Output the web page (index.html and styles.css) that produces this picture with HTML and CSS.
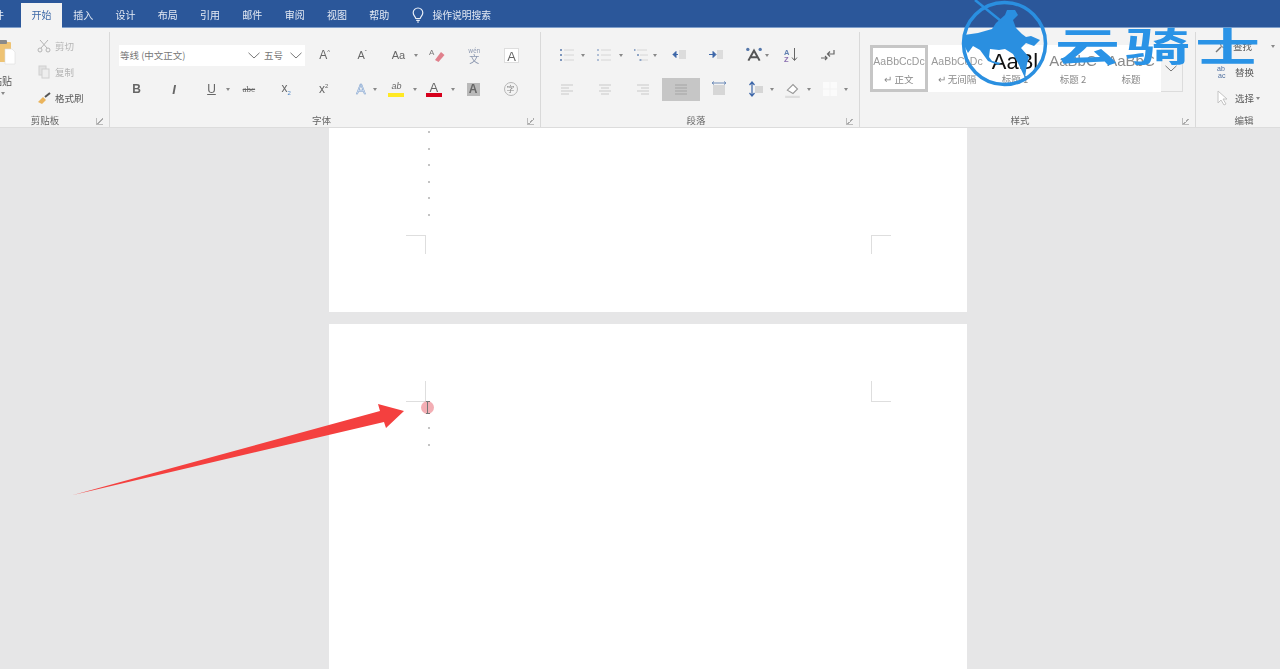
FILE: index.html
```html
<!DOCTYPE html>
<html lang="zh-CN">
<head>
<meta charset="utf-8">
<title>文档 - Word</title>
<link rel="stylesheet" href="styles.css">
</head>
<body>
<header class="chrome">
  <nav class="tabs">
    <span class="tab tab-file">文件</span>
    <span class="tab tab-active">开始</span>
    <span class="tab">插入</span>
    <span class="tab">设计</span>
    <span class="tab">布局</span>
    <span class="tab">引用</span>
    <span class="tab">邮件</span>
    <span class="tab">审阅</span>
    <span class="tab">视图</span>
    <span class="tab">帮助</span>
    <span class="tell">
      <svg class="bulb" viewBox="0 0 12 16"><path d="M3.800 11.500C3.400 9.600 1.200 8.600 1.200 5.800a4.800 4.800 0 0 1 9.600 0c0 2.800-2.200 3.800-2.600 5.700zM4.200 13.400h3.600M5 15h2" fill="none" stroke="#e8eef7" stroke-width="1.200"/></svg>
      操作说明搜索
    </span>
  </nav>
  <section class="ribbon">
    <div class="group group-clip">
      <div class="body clip-body">
        <div class="paste">
          <svg class="paste-ico" viewBox="0 0 22 26"><rect x="1" y="3" width="16" height="20" rx="1" fill="#eec374"/><rect x="5" y="1" width="8" height="4" rx="1" fill="#8a8a8a"/><path d="M11 10h7l3 3v12H11z" fill="#fff" stroke="#ddd" stroke-width=".6"/></svg>
          <span class="paste-text">粘贴</span>
          <i class="caret caret-paste"></i>
        </div>
        <div class="stack">
          <div class="small off"><svg class="ico" viewBox="0 0 16 16"><path d="M4 2l7 8M12 2L5 10" stroke="#b4b4b4" fill="none"/><circle cx="4" cy="12" r="2" fill="none" stroke="#b4b4b4"/><circle cx="12" cy="12" r="2" fill="none" stroke="#b4b4b4"/></svg><span>剪切</span></div>
          <div class="small off"><svg class="ico" viewBox="0 0 16 16"><rect x="3" y="2" width="7" height="9" fill="#e2e2e2" stroke="#d0d0d0"/><rect x="6" y="5" width="7" height="9" fill="#eee" stroke="#d0d0d0"/></svg><span>复制</span></div>
          <div class="small"><svg class="ico" viewBox="0 0 16 16"><path d="M2 12l5-5 3 3-4 4z" fill="#eab45c"/><path d="M9 7l5-4" stroke="#555" stroke-width="2"/></svg><span>格式刷</span></div>
        </div>
      </div>
      <div class="label label-clip">剪贴板</div>
      <i class="launcher"></i>
    </div>

    <div class="group group-font">
      <div class="body rows">
        <div class="row">
          <div class="select select-font"><span>等线 (中文正文)</span><svg class="chev" viewBox="0 0 12 7"><path d="M.5.8L6 6l5.500-5.200" fill="none" stroke="#777"/></svg></div>
          <div class="select select-size"><span>五号</span><svg class="chev" viewBox="0 0 12 7"><path d="M.5.8L6 6l5.500-5.200" fill="none" stroke="#777"/></svg></div>
          <span class="tool"><span class="t t-a">A<sup>^</sup></span></span>
          <span class="tool"><span class="t t-a t-a-sm">A<sup>ˇ</sup></span></span>
          <span class="tool"><span class="t t-aa">Aa</span><i class="caret"></i></span>
          <span class="tool"><svg class="ico" viewBox="0 0 16 16"><path d="M6 13l6-8 3.500 3-6 7z" fill="#e0808c"/><text x="0" y="8" class="svg-t">A</text></svg></span>
          <span class="tool"><span class="wen"><small>wén</small>文</span></span>
          <span class="tool"><span class="t t-box">A</span></span>
        </div>
        <div class="row row-fmt">
          <span class="tool"><b class="t t-b">B</b></span>
          <span class="tool"><i class="t t-i">I</i></span>
          <span class="tool"><span class="t t-u">U</span><i class="caret"></i></span>
          <span class="tool"><span class="t t-abc">abc</span></span>
          <span class="tool"><span class="t t-x">x<sub>2</sub></span></span>
          <span class="tool"><span class="t t-x">x<sup>2</sup></span></span>
          <span class="tool"><span class="t t-fx">A</span><i class="caret caret-near"></i></span>
          <span class="tool"><span class="t t-hl">ab</span><i class="caret"></i></span>
          <span class="tool"><span class="t t-red">A</span><i class="caret"></i></span>
          <span class="tool"><span class="t t-shade">A</span></span>
          <span class="tool"><span class="t t-circle">字</span></span>
        </div>
      </div>
      <div class="label label-shift">字体</div>
      <i class="launcher"></i>
    </div>

    <div class="group group-para">
      <div class="body rows">
        <div class="row">
          <span class="tool"><svg class="ico" viewBox="0 0 16 16"><path d="M5 3h10M5 8h10M5 13h10" stroke="#d6d6d6"/><path d="M1 2h2v2H1zM1 7h2v2H1zM1 12h2v2H1z" fill="#7f97bd"/></svg><i class="caret"></i></span>
          <span class="tool"><svg class="ico" viewBox="0 0 16 16"><path d="M5 3h10M5 8h10M5 13h10" stroke="#d6d6d6"/><path d="M1 2h2v2H1zM1 7h2v2H1zM1 12h2v2H1z" fill="#b0bfd6"/></svg><i class="caret"></i></span>
          <span class="tool"><svg class="ico" viewBox="0 0 16 16"><path d="M4 3h10M7 8h8M9 13h6" stroke="#d6d6d6"/><path d="M1 2h1.500v2H1zM4 7h2v2H4zM6.500 12h2v2h-2z" fill="#8fa5c6"/></svg><i class="caret caret-near"></i></span>
          <span class="tool"><svg class="ico" viewBox="0 0 16 16"><rect x="8" y="3" width="7" height="9" fill="#dcdcdc"/><path d="M2 7.500h5M2 7.500l3-3v6z" fill="#3d66a8" stroke="#3d66a8"/></svg></span>
          <span class="tool"><svg class="ico" viewBox="0 0 16 16"><rect x="9" y="3" width="6" height="9" fill="#dcdcdc"/><path d="M1 7.500h6M8 7.500l-3-3v6z" fill="#3d66a8" stroke="#3d66a8"/></svg></span>
          <span class="tool"><svg class="ico ico-lg" viewBox="0 0 16 16"><path d="M3 13L8 4l5 9M5 10h6" fill="none" stroke="#555" stroke-width="1.800"/><circle cx="2.500" cy="3" r="1.500" fill="#5577aa"/><circle cx="13.500" cy="3" r="1.500" fill="#5577aa"/></svg><i class="caret caret-near"></i></span>
          <span class="tool"><svg class="ico" viewBox="0 0 16 16"><text x="1" y="7.500" class="svg-s">A</text><text x="1" y="15" class="svg-s svg-s-z">Z</text><path d="M11.500 1v12M9 10.500l2.500 3 2.500-3" fill="none" stroke="#666"/></svg></span>
          <span class="tool"><svg class="ico" viewBox="0 0 16 16"><path d="M14 3v4H8M10 4.500L7.500 7 10 9.500M1 11h6M5 9l2 2-2 2" fill="none" stroke="#666" stroke-width="1.200"/></svg></span>
        </div>
        <div class="row row-align">
          <span class="tool"><svg class="ico" viewBox="0 0 16 16"><path d="M2 4h12M2 7h8M2 10h12M2 13h8" stroke="#d8d8d8" stroke-width="1.300"/></svg></span>
          <span class="tool"><svg class="ico" viewBox="0 0 16 16"><path d="M2 4h12M4 7h8M2 10h12M4 13h8" stroke="#d8d8d8" stroke-width="1.300"/></svg></span>
          <span class="tool"><svg class="ico" viewBox="0 0 16 16"><path d="M2 4h12M6 7h8M2 10h12M6 13h8" stroke="#d8d8d8" stroke-width="1.300"/></svg></span>
          <span class="tool tool-on"><svg class="ico" viewBox="0 0 16 16"><path d="M2 4h12M2 7h12M2 10h12M2 13h12" stroke="#b0b0b0" stroke-width="1.300"/></svg></span>
          <span class="tool"><svg class="ico" viewBox="0 0 16 16"><rect x="2" y="4" width="12" height="10" fill="#d6d6d6"/><path d="M1 2h14M1 2l2-1.500M1 2l2 1.500M15 2l-2-1.500M15 2l-2 1.500" stroke="#6f8cb8" fill="none"/></svg></span>
          <span class="tool"><svg class="ico" viewBox="0 0 16 16"><rect x="7" y="5" width="8" height="7" fill="#d6d6d6"/><path d="M4 1v14M1.500 4L4 1l2.500 3M1.500 12L4 15l2.500-3" stroke="#3d66a8" fill="none" stroke-width="1.200"/></svg><i class="caret"></i></span>
          <span class="tool"><svg class="ico ico-lg" viewBox="0 0 16 16"><path d="M3 9l5-5 4 4-4 4z" fill="#fff" stroke="#999"/><path d="M1 15h13" stroke="#ddd" stroke-width="2"/></svg><i class="caret"></i></span>
          <span class="tool"><svg class="ico" viewBox="0 0 16 16"><path d="M1 1h6.500v6.500H1zM8.500 1H15v6.500H8.500zM1 8.500h6.500V15H1zM8.500 8.500H15V15H8.500z" fill="#fbfbfb"/></svg><i class="caret"></i></span>
        </div>
      </div>
      <div class="label label-shift">段落</div>
      <i class="launcher"></i>
    </div>

    <div class="group group-style">
      <div class="body gallery-wrap">
        <div class="gallery">
          <div class="style style-on"><span class="sample">AaBbCcDc</span><span class="sname">↵ 正文</span></div>
          <div class="style"><span class="sample">AaBbCcDc</span><span class="sname">↵ 无间隔</span></div>
          <div class="style"><span class="sample sample-h1">AaBl</span><span class="sname">标题 1</span></div>
          <div class="style"><span class="sample sample-h2">AaBbC</span><span class="sname">标题 2</span></div>
          <div class="style"><span class="sample sample-h2">AaBbC</span><span class="sname">标题</span></div>
        </div>
        <div class="more"><svg class="chev" viewBox="0 0 12 7"><path d="M.5.8L6 6l5.500-5.200" fill="none" stroke="#777"/></svg></div>
      </div>
      <div class="label label-shift">样式</div>
      <i class="launcher"></i>
    </div>

    <div class="group group-edit">
      <div class="body">
        <div class="stack stack-edit">
          <div class="small small-find"><svg class="ico" viewBox="0 0 16 16"><circle cx="10" cy="6" r="3.500" fill="none" stroke="#777"/><path d="M7 9l-5 5" stroke="#777" stroke-width="1.500"/></svg><span>查找</span><i class="caret caret-far"></i></div>
          <div class="small"><svg class="ico" viewBox="0 0 16 16"><text x="3" y="7" class="svg-ab">ab</text><text x="4" y="14" class="svg-ab">ac</text></svg><span>替换</span></div>
          <div class="small"><svg class="ico" viewBox="0 0 16 16"><path d="M4 1v12l3-3 3 5 2-1-3-5h4z" fill="#fff" stroke="#c4c4c4"/></svg><span>选择</span><i class="caret caret-inline"></i></div>
        </div>
      </div>
      <div class="label label-edit">编辑</div>
    </div>
  </section>
</header>

<main class="canvas">
  <article class="page page-one">
    <div class="marks">
      <i></i><i></i><i></i><i></i><i></i><i></i>
    </div>
    <i class="crop crop-bl"></i>
    <i class="crop crop-br"></i>
  </article>
  <article class="page page-two">
    <i class="crop crop-tl"></i>
    <i class="crop crop-tr"></i>
    <div class="marks marks-two"><i></i><i></i></div>
    <span class="cursor"><i></i></span>
  </article>
</main>

<svg class="arrow" viewBox="0 0 1280 669"><polygon points="73,495 380,411 378,404 404,411 386,428 384,422" fill="#f4403f"/></svg>

<div class="brand">
  <svg class="brand-logo" viewBox="0 0 100 90">
    <circle cx="49.500" cy="43.500" r="41" fill="none" stroke="#2a8fe0" stroke-width="3.500"/>
    <path d="M20 0l52 42" stroke="#2a8fe0" stroke-width="2.500" fill="none"/>
    <path d="M9 35l14-2 14-4 4-6 9-8 2-5h8l3 5-5 5 3 8 6 6 4 3 5-1 9 4-6 6-8-3-5 5 8 9-2 7-2 14-6-13-6-11-8-5-6 1-9-1-1 8 3 4 9 2-3 2-10-4-8-11-7-4-5 7-5-10z" fill="#2a8fe0"/>
  </svg>
  <span class="brand-name">云骑士</span>
</div>
</body>
</html>
```

FILE: styles.css
```css
* { box-sizing: border-box; }
html, body { height: 100%; }
body {
  margin: 0;
  height: 669px;
  overflow: hidden;
  display: flex;
  flex-direction: column;
  background: #e6e6e7;
  font-family: "Noto Sans CJK SC", "Noto Sans", sans-serif;
  color: #555;
}
i { font-style: normal; }

/* chrome */
.chrome { filter: blur(.6px); }
.tabs {
  height: 28px;
  background: #2b579a;
  display: flex;
  align-items: flex-end;
  font-size: 10px;
  color: #e4eaf4;
  border-bottom: 1px solid #7f9fcb;
}
.tab {
  width: 42.3px;
  height: 24px;
  line-height: 23px;
  text-align: center;
  flex: none;
}
.tab-file {
  width: 21px;
  display: flex;
  justify-content: flex-end;
  padding-right: 17px;
  white-space: nowrap;
}
.tab-active {
  width: 41px;
  height: 25px;
  background: #f3f3f3;
  color: #3f6aa8;
  margin-bottom: -1px;
}
.tell {
  margin-left: 12px;
  height: 24px;
  line-height: 23px;
  display: flex;
  align-items: center;
  gap: 8px;
  font-size: 9.800px;
  white-space: nowrap;
}
.bulb { width: 12px; height: 16px; margin-top: -1px; }

/* ribbon */
.ribbon {
  height: 100px;
  background: #f3f3f3;
  border-bottom: 1px solid #dcdcdc;
  display: flex;
  align-items: flex-start;
  font-size: 9.5px;
}
.group {
  position: relative;
  flex: none;
  height: 95px;
  margin-top: 4px;
  border-right: 1px solid #d9d9d9;
  display: flex;
  flex-direction: column;
}
.group-clip { width: 110px; overflow: hidden; }
.group-font { width: 431px; padding-left: 8px; }
.group-para { width: 319px; padding-left: 7px; }
.group-style { width: 336px; }
.group-edit { width: 84px; border-right: 0; }
.body { height: 82px; flex: none; }
.rows { padding-top: 6px; }
.row { height: 34px; display: flex; align-items: center; }
.label {
  height: 13px;
  line-height: 13px;
  text-align: center;
  color: #666;
}
.label-clip { padding-right: 19px; }
.label-shift { padding-right: 15px; }
.label-edit { padding-left: 12px; }
.launcher {
  position: absolute;
  right: 6px;
  bottom: 2px;
  width: 7px;
  height: 7px;
  border-left: 1px solid #bbb;
  border-bottom: 1px solid #bbb;
  background: linear-gradient(135deg, transparent 50%, #aaa 50%, #aaa 60%, transparent 60%);
}

/* clipboard */
.clip-body { display: flex; }
.paste {
  width: 16px;
  flex: none;
  display: flex;
  flex-direction: column;
  align-items: flex-end;
  overflow: hidden;
  padding-top: 7px;
}
.paste-ico { width: 22px; height: 26px; flex: none; }
.paste-text {
  margin-right: 4px;
  margin-top: 9px;
  line-height: 14px;
  font-size: 10px;
  white-space: nowrap;
}
.stack { padding: 1px 0 0 20px; }
.stack-edit { padding-left: 18px; }
.small {
  height: 26px;
  display: flex;
  align-items: center;
  gap: 3px;
  white-space: nowrap;
  color: #5a5a5a;
}
.small.off { color: #b5b5b5; }
.stack-edit .small { gap: 5px; }
.stack-edit .small-find { gap: 3px; }

/* tool buttons */
.tool {
  position: relative;
  width: 37.4px;
  height: 23px;
  flex: none;
  display: flex;
  align-items: center;
  justify-content: center;
}
.row-align .tool { width: 38px; }
.row-align .tool:nth-child(n+5) { width: 37px; }
.tool-on { background: #c6c6c6; }
.ico { width: 16px; height: 16px; flex: none; }
.ico-lg { width: 18px; height: 18px; }
.caret {
  display: block;
  position: absolute;
  right: 0;
  top: 10px;
  width: 0;
  height: 0;
  border: 2px solid transparent;
  border-top: 3px solid #888;
  border-bottom: 0;
}
.caret-near { right: 3px; }
.caret-inline { position: static; margin-left: -3px; }
.caret-far { position: static; margin-left: 16px; }
.caret-paste { position: static; align-self: flex-start; margin: 4px 0 0 1px; }
.select {
  height: 21px;
  background: #fff;
  display: flex;
  align-items: center;
  justify-content: space-between;
  padding: 0 1px 0 1px;
  color: #777;
  font-size: 9.5px;
  flex: none;
}
.select-font { width: 144px; margin-left: 1px; }
.select-size { width: 42px; margin-right: 1px; }
.chev { width: 12px; height: 7px; margin-right: 2px; }
.t { font-family: "Liberation Sans", Arial, sans-serif; line-height: 1; color: #666; }
.t sup, .t sub { font-size: 6px; }
.t-a { font-size: 12px; }
.t-a-sm { font-size: 11px; }
.t-aa { font-size: 11px; margin-left: -2px; }
.t-box {
  width: 15px;
  height: 15px;
  font-size: 13px;
  text-align: center;
  line-height: 15px;
  background: #fff;
  border: 1px solid #ddd;
}
.wen { font-size: 10px; line-height: 9px; color: #8a96ae; display: flex; flex-direction: column; align-items: center; }
.wen small { font-size: 6px; line-height: 6px; }
.t-b { font-size: 12px; }
.t-i { font-size: 13px; font-weight: bold; font-style: italic; }
.t-u { font-size: 12px; text-decoration: underline; }
.t-abc { font-size: 9px; font-family: "Liberation Serif", serif; text-decoration: line-through; }
.t-x { font-size: 12px; }
.t-x sub { color: #4f86c6; }
.t-fx { font-size: 14px; color: #d2e0f2; -webkit-text-stroke: .5px #7e9fcb; }
.t-hl {
  font-size: 9px;
  font-style: italic;
  width: 16px;
  height: 15px;
  text-align: center;
  border-bottom: 4px solid #ffe924;
  margin-left: -4px;
}
.t-red {
  font-size: 13px;
  width: 16px;
  height: 16px;
  text-align: center;
  border-bottom: 4px solid #d6001c;
  margin-left: -4px;
}
.t-shade {
  width: 13px;
  height: 13px;
  font-size: 12px;
  line-height: 13px;
  text-align: center;
  font-weight: bold;
  background: #b9b9b9;
  color: #666;
}
.t-circle {
  width: 14px;
  height: 14px;
  border-radius: 50%;
  border: 1px solid #b5b5b5;
  font-size: 8px;
  line-height: 12px;
  text-align: center;
  font-family: "Noto Sans CJK SC", sans-serif;
  color: #888;
}
.svg-t { font: 8px "Liberation Sans", sans-serif; fill: #777; }
.svg-s { font: bold 7.500px "Liberation Sans", sans-serif; fill: #5f7fb0; }
.svg-s-z { fill: #8a6fb0; }
.svg-ab { font: 7px "Liberation Sans", sans-serif; fill: #4f6f9f; }

/* styles gallery */
.gallery-wrap { display: flex; padding: 13px 0 0 10px; align-items: flex-start; }
.gallery { display: flex; width: 291px; height: 47px; background: #fff; }
.style {
  width: 58px;
  height: 47px;
  flex: none;
  display: flex;
  flex-direction: column;
  align-items: center;
  justify-content: flex-start;
  overflow: hidden;
  white-space: nowrap;
  color: #888;
}
.style-on { border: 3px solid #c6c6c6; background: #fff; }
.sample {
  display: block;
  height: 26px;
  line-height: 32px;
  font-family: "Liberation Sans", sans-serif;
  font-size: 10.500px;
  color: #999;
}
.style-on .sample { height: 23px; line-height: 26px; }
.sample-h1 { font-size: 22px; color: #111; line-height: 34px; }
.sample-h2 { font-size: 15px; line-height: 32px; color: #8a8a8a; }
.sname { font-size: 9.500px; line-height: 17px; }
.more {
  width: 22px;
  height: 47px;
  border: 1px solid #dcdcdc;
  border-left: 0;
  display: flex;
  align-items: center;
  justify-content: center;
}

/* document canvas */
.canvas {
  flex: 1;
  min-height: 0;
  display: flex;
  flex-direction: column;
  align-items: center;
  gap: 12px;
  padding-left: 16px;
  filter: blur(.3px);
}
.page {
  position: relative;
  width: 638px;
  background: #fff;
  flex: none;
}
.page-one { height: 184px; }
.page-two { flex: 1; }
.marks {
  display: flex;
  flex-direction: column;
  gap: 14.600px;
  margin-left: 99px;
  padding-top: 3px;
}
.marks i { width: 2px; height: 2px; background: #c4c4c4; }
.marks-two { position: absolute; left: 0; top: 100px; }
.crop { position: absolute; width: 20px; height: 19px; border: 0 solid #dedede; }
.crop-bl { left: 77px; top: 107px; border-top-width: 1px; border-right-width: 1px; }
.crop-br { left: 542px; top: 107px; border-top-width: 1px; border-left-width: 1px; }
.crop-tl { left: 77px; top: 57px; height: 21px; border-bottom-width: 1px; border-right-width: 1px; }
.crop-tr { left: 542px; top: 57px; height: 21px; border-bottom-width: 1px; border-left-width: 1px; }
.cursor {
  position: absolute;
  left: 92px;
  top: 77px;
  width: 13px;
  height: 13px;
  border-radius: 50%;
  background: rgba(236, 130, 140, .65);
  display: flex;
  justify-content: center;
}
.cursor i {
  width: 4px;
  height: 13px;
  border: 1px solid #777;
  border-width: 1px 0;
  background: linear-gradient(#777, #777) center / 1px 100% no-repeat;
}

/* overlays */
.arrow { position: absolute; left: 0; top: 0; width: 1280px; height: 669px; }
.brand { position: absolute; left: 955px; top: 0; width: 325px; height: 90px; }
.brand-logo { position: absolute; left: 0; top: 0; width: 100px; height: 90px; filter: blur(.4px); }
.brand-name {
  position: absolute;
  left: 100px;
  top: -1px;
  font-size: 65px;
  line-height: 90px;
  font-weight: 700;
  letter-spacing: 5px;
  color: #2a93e6;
  transform: scaleY(.6);
  transform-origin: left center;
  white-space: nowrap;
  filter: blur(.4px);
}
```
